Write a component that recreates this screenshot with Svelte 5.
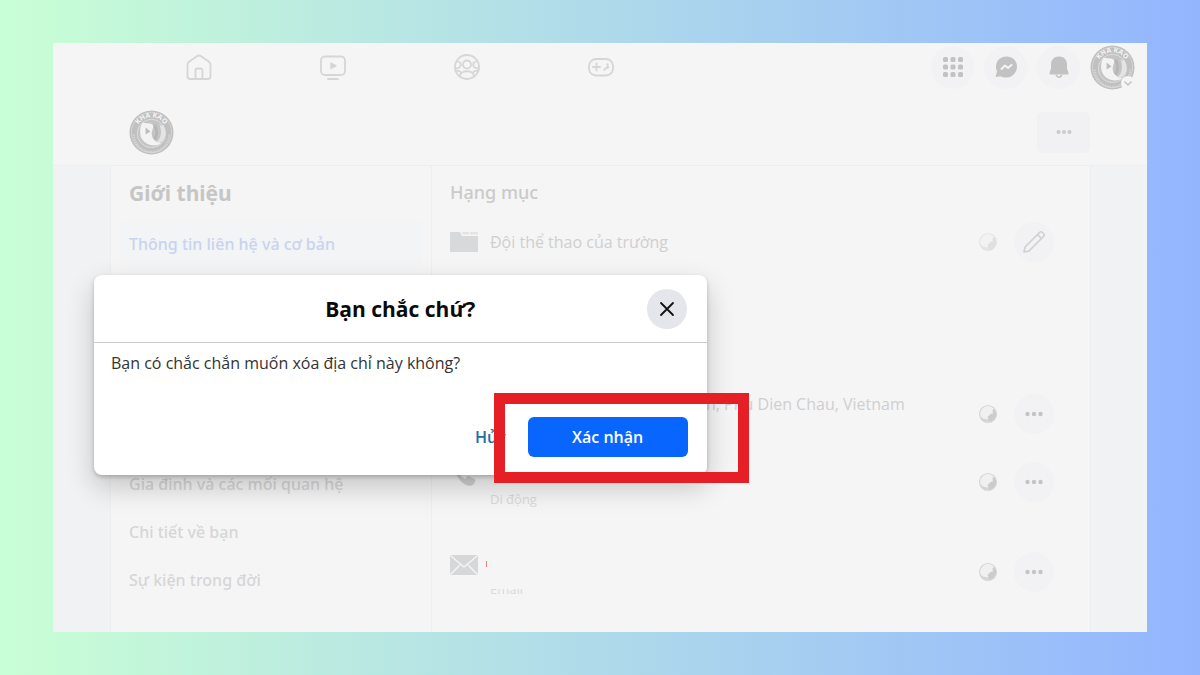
<script>
  const tabs = ['home', 'watch', 'groups', 'gaming'];
  const otherLinks = ['Gia đình và các mối quan hệ', 'Chi tiết về bạn', 'Sự kiện trong đời'];
</script>

{#snippet avatar()}
  <svg class="avatar" viewBox="0 0 46 46" aria-hidden="true">
    <defs>
      <path id="arc" d="M7.5 23a15.5 15.5 0 0 1 31 0" />
    </defs>
    <circle cx="23" cy="23" r="22.5" fill="#c0c0c0" />
    <circle cx="23" cy="23" r="20.5" fill="none" stroke="#d4d4d4" stroke-width="1" />
    <path d="M5 25a18 18 0 0 0 36 0" fill="none" stroke="#d8d8d8" stroke-width="2" stroke-dasharray="1.5 1" />
    <circle cx="23" cy="24" r="14.5" fill="#c4c4c4" stroke="#dedede" stroke-width="1" />
    <path d="M14 13l9 1 2 2-2 8 1 4c2 4 5 5 9 6-8 5-18 1-21-7-1-5-1-10 2-14z" fill="#f3f3f3" />
    <path d="M17 18l5 4-5 3z" fill="#bdbdbd" />
    <path d="M31 14l2 2 2-1c3 6 3 13-1 17-2 2-4 2-6 1 5-4 6-11 3-19z" fill="#e4e4e4" />
    <path d="M26 15c3 5 3 11 0 15" fill="none" stroke="#b6b6b6" stroke-width="3" />
    <text font-size="7" font-weight="700" fill="#f5f5f5">
      <textPath href="#arc" startOffset="50%" text-anchor="middle">KHA KAO</textPath>
    </text>
  </svg>
{/snippet}

{#snippet dots()}
  <svg width="20" height="20" viewBox="0 0 20 20" fill="#c3c4c6" aria-hidden="true">
    <circle cx="3.5" cy="10" r="2.2" />
    <circle cx="10" cy="10" r="2.2" />
    <circle cx="16.5" cy="10" r="2.2" />
  </svg>
{/snippet}

{#snippet globe()}
  <svg width="20" height="20" viewBox="0 0 20 20" aria-hidden="true">
    <circle cx="10" cy="10" r="8.5" fill="#f0f0f1" stroke="#d6d7d9" stroke-width="1.2" />
    <path d="M15.5 5c2.500 2 3 4 2.800 6-.8 3.500-3.500 6.500-7.300 7l-2-2 1.500-1.500-1-1.500 3-3 2.500-.5-.5-3z" fill="#cbccce" />
    <path d="M2 12l3 2.500 4 1 1 2.500c-4 .5-7-2-8-6z" fill="#d3d4d6" />
  </svg>
{/snippet}

<div class="backdrop">
  <div class="window">
    <header>
      <div class="topbar">
        <nav class="tabs">
          {#each tabs as tab}
            <a href="#{tab}" aria-label={tab}>
              <svg width="28" height="28" viewBox="0 0 28 28" fill="none" stroke="#d6d6d6" stroke-width="1.8" stroke-linejoin="round" stroke-linecap="round">
                {#if tab === 'home'}
                  <path d="M12.300 3 4 8.800Q2.500 10 2.500 12v11q0 3 3 3h17q3 0 3-3V12q0-2-1.500-3.200L15.700 3Q14 2 12.300 3z" />
                  <path d="M10.500 26V17.500q0-2 2-2h3q2 0 2 2V26" />
                {:else if tab === 'watch'}
                  <rect x="2" y="3.5" width="24" height="18.5" rx="4" />
                  <path d="M12 10v5.500l5-2.700z" fill="#d2d2d2" stroke-width="1.4" />
                  <path d="M9 26h10" />
                {:else if tab === 'groups'}
                  <circle cx="14" cy="14" r="12" />
                  <circle cx="14" cy="11.5" r="4" />
                  <path d="M7 23.500c0-7 14-7 14 0M5 8.500c4 1 4 6-1.500 7M23 8.500c-4 1-4 6 1.500 7M3.500 18c2-.5 3.500 0 4.500 1.500M24.500 18c-2-.5-3.500 0-4.500 1.500" />
                {:else}
                  <rect x="2" y="6" width="24" height="16.5" rx="7" />
                  <path d="M9.500 10.500v7M6 14h7" />
                  <path d="M20.500 11.500v.1M17.500 16.500v.1M19.500 15l1.500-1" stroke-width="2.4" />
                {/if}
              </svg>
            </a>
          {/each}
        </nav>
        <div class="tools">
          <button class="round" aria-label="Menu">
            <svg width="22" height="22" viewBox="0 0 22 22" fill="#c2c2c2">
              {#each [1, 8.5, 16] as y}
                {#each [1, 8.5, 16] as x}
                  <rect {x} {y} width="5" height="5" rx="1.5" />
                {/each}
              {/each}
            </svg>
          </button>
          <button class="round" aria-label="Messenger">
            <svg width="24" height="24" viewBox="0 0 24 24">
              <path d="M12.500 1.500C6.500 1.500 2 5.700 2 11.500c0 2 .3 3.500 1 5L1.500 22l5-.8c2 1 4 1.300 6 1.300 6 0 10.500-5 10.500-11s-4.500-10-10.500-10z" fill="#c2c2c2" />
              <path d="M7.500 14l3.500-3.500 3 2.500 3.500-3" fill="none" stroke="#f5f5f5" stroke-width="2" stroke-linejoin="round" stroke-linecap="round" />
            </svg>
          </button>
          <button class="round" aria-label="Thông báo">
            <svg width="22" height="24" viewBox="0 0 22 24" fill="#c2c2c2">
              <path d="M11 1.500c-5 0-8 3.500-8 8v4L1.500 18q-.5 1.500 1 1.500h17q1.500 0 1-1.500L19 13.500v-4c0-4.500-3-8-8-8z" />
              <path d="M8 20q3 4.500 6 0" fill="none" stroke="#c2c2c2" stroke-width="1.5" />
            </svg>
          </button>
          <button class="account" aria-label="Tài khoản">
            {@render avatar()}
            <span class="badge">
              <svg width="10" height="10" viewBox="0 0 10 10" fill="none" stroke="#c2c2c2" stroke-width="1.5"><path d="M1.500 3.500 5 7l3.500-3.500" /></svg>
            </span>
          </button>
        </div>
      </div>
      <div class="profile">
        {@render avatar()}
        <button class="more" aria-label="Xem thêm">
          <svg width="18" height="18" viewBox="0 0 18 18" fill="#c9cacc">
            <circle cx="3.5" cy="9" r="2" /><circle cx="9" cy="9" r="2" /><circle cx="14.5" cy="9" r="2" />
          </svg>
        </button>
      </div>
    </header>

    <main>
      <aside>
        <h2>Giới thiệu</h2>
        <a class="active" href="#contact">Thông tin liên hệ và cơ bản</a>
        <div class="rest">
          {#each otherLinks as link}
            <a href="#about">{link}</a>
          {/each}
        </div>
      </aside>

      <section>
        <h3>Hạng mục</h3>
        <div class="row category">
          <svg class="icon" width="28" height="22" viewBox="0 0 28 22" fill="#d8d9db" aria-hidden="true">
            <path d="M0 1h10l2 4h16v16H0z" />
            <path d="M12 1h7v2.500h-6zM20 1h8v2.500h-8z" fill="#e3e4e6" />
          </svg>
          <p>Đội thể thao của trường</p>
          <span class="faded">{@render globe()}</span>
          <button class="action" aria-label="Chỉnh sửa">
            <svg width="24" height="24" viewBox="0 0 24 24" fill="none" stroke="#d0d0d2" stroke-width="1.6" stroke-linejoin="round">
              <path d="M2 22l1-5L17.500 2.500Q19 1 20.500 2.500l1 1Q23 5 21.500 6.500L7 21zM15.500 4.500l4 4" />
            </svg>
          </button>
        </div>
        <div class="row address">
          <p>n, Phu Dien Chau, Vietnam</p>
          {@render globe()}
          <button class="action" aria-label="Tùy chọn">{@render dots()}</button>
        </div>
        <div class="row phone">
          <svg class="icon" width="28" height="22" viewBox="0 0 28 22" fill="#cfd0d1" aria-hidden="true">
            <path d="M5 1l4-1 3 6-3 3q2 4 6 6l3-3 7 3c1 3-1 6-5 7C12 21 5 13 5 1z" />
          </svg>
          <p class="caption">Di động</p>
          {@render globe()}
          <button class="action" aria-label="Tùy chọn">{@render dots()}</button>
        </div>
        <div class="row email">
          <svg class="icon" width="28" height="22" viewBox="0 0 28 22" aria-hidden="true">
            <rect x="0" y="1" width="28" height="20" rx="2" fill="#d6d7d9" />
            <path d="M1 2l13 11L27 2M1 20l9-9M27 20l-9-9" fill="none" stroke="#f3f3f3" stroke-width="1.6" />
          </svg>
          <div class="masked">
            <i></i>
            <p class="caption">Email</p>
          </div>
          {@render globe()}
          <button class="action" aria-label="Tùy chọn">{@render dots()}</button>
        </div>
      </section>
    </main>

    <div class="dialog" role="dialog" aria-labelledby="dialog-title">
      <div class="dialog-head">
        <h1 id="dialog-title">Bạn chắc chứ?</h1>
        <button class="close" aria-label="Đóng">
          <svg width="16" height="16" viewBox="0 0 16 16" fill="none" stroke="#111" stroke-width="1.8" stroke-linecap="round"><path d="M2 2l12 12M14 2 2 14" /></svg>
        </button>
      </div>
      <p>Bạn có chắc chắn muốn xóa địa chỉ này không?</p>
      <div class="dialog-foot">
        <button class="cancel">Hủy</button>
        <button class="confirm">Xác nhận</button>
      </div>
      <div class="marker"></div>
    </div>
  </div>
</div>

<style>
  :global(body) {
    margin: 0;
    font-family: "Open Sans", "Noto Sans", sans-serif;
  }

  .backdrop {
    display: flex;
    box-sizing: border-box;
    min-height: 100vh;
    padding: 43px 53px;
    background: linear-gradient(90deg, #c9ffd5, #93b5ff);
  }

  .window {
    position: relative;
    display: flex;
    flex-direction: column;
    flex: 1;
    min-width: 0;
    background: #f1f2f4;
  }

  h1, h2, h3, p {
    margin: 0;
  }

  button {
    padding: 0;
    border: none;
    font-family: inherit;
    cursor: pointer;
  }

  svg {
    display: block;
    flex: none;
  }

  a {
    text-decoration: none;
  }

  header {
    background: #f5f5f5;
    border-bottom: 1px solid #eeeeef;
  }

  .topbar {
    display: flex;
    align-items: center;
    justify-content: space-between;
    height: 48px;
    padding: 0 12px 0 79px;
  }

  .tabs {
    display: flex;
  }

  .tabs a {
    display: flex;
    justify-content: center;
    width: 134px;
  }

  .tools {
    display: flex;
    align-items: center;
    gap: 10px;
  }

  .round,
  .action,
  .close {
    display: flex;
    align-items: center;
    justify-content: center;
    flex: none;
    border-radius: 50%;
    background: #f2f2f4;
  }

  .round {
    width: 43px;
    height: 43px;
  }

  .account {
    position: relative;
    background: none;
  }

  .avatar {
    width: 45px;
    height: 45px;
  }

  .badge {
    position: absolute;
    right: 0;
    bottom: 0;
    display: flex;
    padding: 2px;
    border-radius: 50%;
    background: #f5f5f5;
  }

  .profile {
    display: flex;
    align-items: center;
    justify-content: space-between;
    height: 66px;
    padding: 8px 57px 0 76px;
  }

  .more {
    display: flex;
    align-items: center;
    justify-content: center;
    width: 53px;
    height: 41px;
    border-radius: 6px;
    background: #f1f1f3;
  }

  main {
    display: flex;
    flex: 1;
    margin: 0 56px 0 57px;
    background: #f5f5f5;
    border: solid #eeeef0;
    border-width: 0 1px;
  }

  aside {
    flex: none;
    width: 302px;
    padding: 0 9px;
    border-right: 1px solid #eeeeef;
    font-family: "Noto Sans", "Open Sans", sans-serif;
  }

  h2 {
    padding: 0 9px;
    font-size: 21px;
    line-height: 54px;
    color: #c6c6c6;
  }

  aside a {
    display: block;
    padding: 0 9px;
    border-radius: 6px;
    font-size: 16px;
    font-weight: 500;
    line-height: 48px;
    color: #d6d6d7;
  }

  aside .active {
    background: #f3f4f6;
    color: #c8d3ee;
  }

  /* room for the menu entries under the dialog */
  .rest {
    padding-top: 192px;
  }

  section {
    flex: 1;
    min-width: 0;
    padding: 0 36px 0 18px;
  }

  h3 {
    font-family: "Noto Sans", "Open Sans", sans-serif;
    font-size: 18px;
    font-weight: 500;
    line-height: 52px;
    color: #cacaca;
  }

  .row {
    display: flex;
    align-items: center;
    gap: 12px;
    height: 68px;
    font-size: 16px;
    color: #cfcfcf;
  }

  .row p,
  .masked {
    flex: 1;
  }

  .action {
    width: 40px;
    height: 40px;
    margin-left: 4px;
  }

  .category {
    height: 48px;
  }

  .faded {
    opacity: 0.5;
  }

  .address {
    margin-top: 114px;
  }

  .address p {
    padding: 0 0 20px 256px;
  }

  .phone .icon,
  .email .icon {
    margin-bottom: 14px;
  }

  .row .caption {
    font-size: 13px;
    line-height: 18px;
    color: #d9d9d9;
  }

  .phone .caption {
    padding-top: 34px;
  }

  .email {
    height: 112px;
  }

  .masked {
    padding-top: 14px;
  }

  .masked i {
    display: block;
    width: 1px;
    height: 6px;
    margin-left: -4px;
    background: #e0868a;
  }

  .masked .caption {
    display: flex;
    align-items: flex-end;
    height: 9px;
    margin-top: 22px;
    overflow: hidden;
  }

  .dialog {
    position: absolute;
    top: 232px;
    left: 41px;
    width: 56%;
    border-radius: 8px;
    background: #fff;
    box-shadow: 0 12px 28px rgba(0, 0, 0, 0.2), 0 2px 4px rgba(0, 0, 0, 0.2);
  }

  .dialog-head {
    display: grid;
    grid-template-columns: 40px 1fr 40px;
    align-items: center;
    height: 67px;
    padding: 0 20px;
    border-bottom: 1px solid #cbcbcb;
  }

  h1 {
    grid-column: 2;
    font-size: 21px;
    text-align: center;
    color: #0a0a0a;
  }

  .close {
    width: 40px;
    height: 40px;
    background: #e4e6eb;
  }

  .dialog p {
    padding: 8px 17px 0;
    font-size: 16px;
    line-height: 24px;
    color: #333;
  }

  .dialog-foot {
    display: flex;
    justify-content: flex-end;
    gap: 22px;
    padding: 42px 19px 18px;
  }

  .cancel,
  .confirm {
    height: 40px;
    font-size: 16px;
    font-weight: 600;
  }

  .cancel {
    background: none;
    color: #1c6ea8;
  }

  .confirm {
    width: 160px;
    border-radius: 6px;
    background: #0866ff;
    color: #fff;
  }

  .marker {
    position: absolute;
    right: -42px;
    bottom: -8px;
    box-sizing: border-box;
    width: 255px;
    height: 90px;
    border: 11px solid #e61e25;
    pointer-events: none;
  }
</style>
